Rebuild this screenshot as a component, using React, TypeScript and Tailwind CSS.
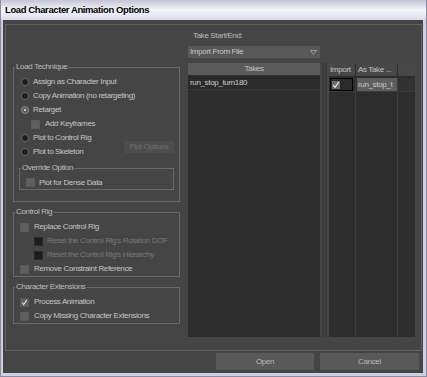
import React from 'react';

const txt = 'text-[#c6c6c6]';
const dim = 'text-[#777777]';

function Radio({ label, checked }: { label: string; checked?: boolean }) {
  return (
    <div className="flex h-[14px] items-center">
      <span
        className={
          'ml-[7px] flex h-[8px] w-[8px] items-center justify-center rounded-full border ' +
          (checked ? 'border-[#8a8a8a] bg-[#5c5c5c]' : 'border-[#686868] bg-[#1e1e1e]')
        }
      >
        {checked && <span className="h-[2px] w-[2px] rounded-full bg-[#e0e0e0]" />}
      </span>
      <span className={'ml-[4px] ' + txt}>{label}</span>
    </div>
  );
}

function Check({ checked, disabled }: { checked?: boolean; disabled?: boolean }) {
  return (
    <span
      className={
        'flex h-[9px] w-[9px] shrink-0 items-center justify-center border ' +
        (disabled ? 'border-[#2a2a2a] bg-[#1c1c1c]' : 'border-[#5a5a5a] bg-[#5f5f5f]')
      }
    >
      {checked && (
        <svg width="9" height="9" viewBox="0 0 9 9">
          <path d="M1.5 4.5 L3.5 7 L7.5 1.5" fill="none" stroke="#eeeeee" strokeWidth="1.3" />
        </svg>
      )}
    </span>
  );
}

function CheckRow({
  label,
  indent,
  gap = 5,
  checked,
  disabled,
  h = 14,
}: {
  label: string;
  indent: number;
  gap?: number;
  checked?: boolean;
  disabled?: boolean;
  h?: number;
}) {
  return (
    <div className={'flex items-center ' + (h === 13 ? 'h-[13px]' : 'h-[14px]')}>
      <span style={{ marginLeft: indent }}>
        <Check checked={checked} disabled={disabled} />
      </span>
      <span style={{ marginLeft: gap }} className={disabled ? dim : txt}>
        {label}
      </span>
    </div>
  );
}

function Group({ title, className, children }: { title: string; className?: string; children: React.ReactNode }) {
  return (
    <fieldset className={'border border-[#696969] ' + (className ?? '')}>
      <legend className="ml-[1px] px-[1px] text-[8px] leading-[10px] text-[#bdbdbd]">{title}</legend>
      {children}
    </fieldset>
  );
}

export default function App() {
  return (
    <div className="flex h-[377px] w-[427px] flex-col whitespace-nowrap border-x border-b border-[#8c8ca6] bg-[#cfcfe0] font-['Liberation_Sans',Arial,sans-serif] text-[8px] leading-[10px] tracking-[-0.35px]">
      <div className="flex h-[20px] shrink-0 items-center bg-gradient-to-b from-[#c4c4d8] via-[#f4f4fa] to-[#dcdcea] pl-[4px]">
        <span className="text-[9.5px] font-bold tracking-[-0.4px] text-black">Load Character Animation Options</span>
      </div>
      <div className="ml-[2px] mr-[3px] mb-[3px] flex flex-1 flex-col bg-[#454545]">
        <div className="ml-[2px] mt-[4px] flex h-[327px] w-[417px] border border-[#626262]">
          {/* left column */}
          <div className="ml-[7px] mt-[37px] flex w-[167px] flex-col">
            <Group title="Load Technique" className="pb-[11px]">
              <div className="mt-[3px]">
                <Radio label="Assign as Character Input" />
                <Radio label="Copy Animation (no retargeting)" />
                <Radio label="Retarget" checked />
                <CheckRow label="Add Keyframes" indent={17} gap={5} />
                <div className="flex">
                  <div className="flex flex-1 flex-col">
                    <Radio label="Plot to Control Rig" />
                    <Radio label="Plot to Skeleton" />
                  </div>
                  <div className="mr-[5px] mt-[10px] flex h-[12px] w-[50px] items-center justify-center bg-[#4d4d4d] text-[#6e6e6e]">
                    Plot Options
                  </div>
                </div>
              </div>
              <Group title="Override Option" className="mx-[5px] mt-[4px]">
                <div className="mt-[3px]">
                  <CheckRow label="Plot for Dense Data" indent={6} gap={4} h={13} />
                </div>
              </Group>
            </Group>
            <Group title="Control Rig" className="mt-[5px]">
              <div className="mt-[3px]">
                <CheckRow label="Replace Control Rig" indent={6} gap={5} />
                <CheckRow label="Reset the Control Rig's Rotation DOF" indent={20} gap={4} disabled />
                <CheckRow label="Reset the Control Rig's Hierarchy" indent={20} gap={4} disabled />
                <CheckRow label="Remove Constraint Reference" indent={6} gap={5} />
              </div>
            </Group>
            <Group title="Character Extensions" className="mt-[5px]">
              <div className="mt-[3px]">
                <CheckRow label="Process Animation" indent={6} gap={5} checked />
                <CheckRow label="Copy Missing Character Extensions" indent={6} gap={5} />
              </div>
            </Group>
          </div>

          {/* right column */}
          <div className="ml-[8px] flex flex-col">
            <div className="ml-[5px] mt-[6px] h-[10px] text-[#bdbdbd]">Take Start/End:</div>
            <div className="mt-[5px] flex h-[12px] w-[132px] items-center justify-between bg-[#585858] pl-[2px] pr-[3px]">
              <span className={txt}>Import From File</span>
              <svg width="7" height="5" viewBox="0 0 7 5">
                <path d="M0.5 0.5 H6.5 L3.5 4.5 Z" fill="none" stroke="#9a9a9a" strokeWidth="1" />
              </svg>
            </div>
            <div className="mt-[5px] flex h-[274px]">
              {/* takes list */}
              <div className="flex w-[132px] flex-col bg-[#2e2e2e]">
                <div className="flex h-[12px] items-center justify-center bg-[#5a5a5a] text-[#c4c4c4]">Takes</div>
                <div className="mt-[1px] flex h-[14px] items-center border-b border-[#3a3a3a] bg-[#2a2a2a] pl-[2px] text-[#cccccc]">
                  run_stop_turn180
                </div>
              </div>
              {/* splitter */}
              <div className="ml-[2px] w-[5px] border-x border-[#383838] bg-[#3e3e3e]" />
              {/* import table */}
              <div className="ml-[2px] flex w-[86px] flex-col bg-[#2d2d2d]">
                <div className="flex h-[13px] bg-[#474747]">
                  <div className="flex w-[27px] items-center border-r border-[#2e2e2e] pl-[1px] text-[#c4c4c4]">Import</div>
                  <div className="flex w-[42px] items-center border-r border-[#2e2e2e] pl-[2px] text-[#c4c4c4]">As Take ...</div>
                  <div className="flex-1" />
                </div>
                <div className="mt-[2px] flex h-[13px]">
                  <div className="flex w-[27px] border-r border-[#3c3c3c] pl-[1px] pr-[2px]">
                    <div className="flex flex-1 items-center border border-black bg-[#2a2a2a] pl-[1px]">
                      <span className="flex h-[8px] w-[8px] items-center justify-center bg-[#6a6a6a]">
                        <svg width="8" height="8" viewBox="0 0 8 8">
                          <path d="M1.2 4 L3 6.3 L6.8 1.2" fill="none" stroke="#f0f0f0" strokeWidth="1.2" />
                        </svg>
                      </span>
                    </div>
                  </div>
                  <div className="flex w-[42px] items-center overflow-hidden border-r border-[#3c3c3c] pl-[1px]">
                    <div className="flex h-full w-full items-center overflow-hidden bg-[#5e5e5e] pl-[1px] text-[#cacaca]">run_stop_t</div>
                  </div>
                  <div className="flex-1 bg-[#323232]" />
                </div>
                <div className="flex flex-1 border-t border-[#3a3a3a]">
                  <div className="w-[27px] border-r border-[#3c3c3c]" />
                  <div className="w-[42px] border-r border-[#3c3c3c]" />
                  <div className="flex-1" />
                </div>
              </div>
            </div>
          </div>
        </div>
        <div className="mt-[2px] flex justify-end gap-[6px] pr-[4px]">
          <div className="flex h-[17px] w-[98px] items-center justify-center bg-[#595959] text-[#b8b8b8]">Open</div>
          <div className="flex h-[17px] w-[99px] items-center justify-center bg-[#595959] text-[#b8b8b8]">Cancel</div>
        </div>
      </div>
    </div>
  );
}
